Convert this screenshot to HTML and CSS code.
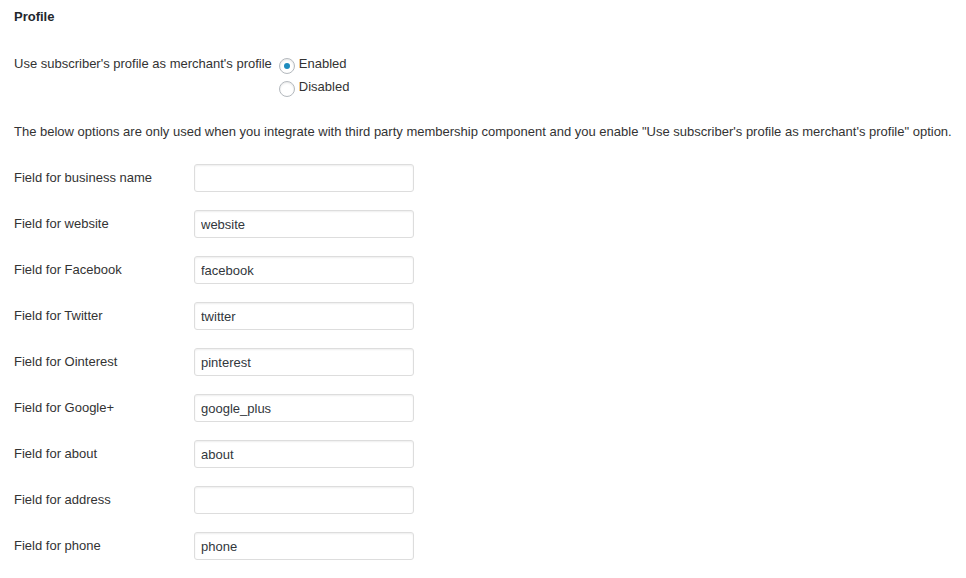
FILE: index.html
```html
<!DOCTYPE html>
<html>
<head>
<meta charset="utf-8">
<link rel="stylesheet" href="styles.css">
</head>
<body>
<div class="page">
  <h3 class="heading">Profile</h3>
  <div class="option-row">
    <div class="option-label">Use subscriber's profile as merchant's profile</div>
    <div class="radio-group">
      <label class="radio-item"><input type="radio" name="use" class="radio" checked><span>Enabled</span></label>
      <label class="radio-item"><input type="radio" name="use" class="radio"><span>Disabled</span></label>
    </div>
  </div>
  <p class="note">The below options are only used when you integrate with third party membership component and you enable "Use subscriber's profile as merchant's profile" option.</p>
  <div class="fields">
    <div class="field-row"><label class="field-label">Field for business name</label><input class="text-input" type="text" value=""></div>
    <div class="field-row"><label class="field-label">Field for website</label><input class="text-input" type="text" value="website"></div>
    <div class="field-row"><label class="field-label">Field for Facebook</label><input class="text-input" type="text" value="facebook"></div>
    <div class="field-row"><label class="field-label">Field for Twitter</label><input class="text-input" type="text" value="twitter"></div>
    <div class="field-row"><label class="field-label">Field for Ointerest</label><input class="text-input" type="text" value="pinterest"></div>
    <div class="field-row"><label class="field-label">Field for Google+</label><input class="text-input" type="text" value="google_plus"></div>
    <div class="field-row"><label class="field-label">Field for about</label><input class="text-input" type="text" value="about"></div>
    <div class="field-row"><label class="field-label">Field for address</label><input class="text-input" type="text" value=""></div>
    <div class="field-row"><label class="field-label">Field for phone</label><input class="text-input" type="text" value="phone"></div>
  </div>
</div>
</body>
</html>
```

FILE: styles.css
```css
html, body {
  margin: 0;
  padding: 0;
  background: #fff;
}
body {
  font-family: "Liberation Sans", Arial, sans-serif;
  font-size: 13px;
  line-height: 18px;
  color: #333;
}
.page {
  padding: 8px 14px 0 14px;
}
.heading {
  margin: 0;
  font-size: 13px;
  font-weight: bold;
  line-height: 18px;
  color: #23282d;
}
.option-row {
  display: flex;
  align-items: flex-start;
  margin-top: 29px;
}
.option-label {
  margin-right: 7px;
}
.radio-group {
  display: flex;
  flex-direction: column;
  gap: 4px;
}
.radio-item {
  display: flex;
  align-items: flex-start;
  gap: 4px;
}
.radio {
  -webkit-appearance: none;
  appearance: none;
  margin: 3px 0 0 0;
  width: 16px;
  height: 16px;
  border: 1px solid #b4b9be;
  border-radius: 50%;
  background: #fff;
  box-shadow: inset 0 1px 2px rgba(0,0,0,0.1);
  box-sizing: border-box;
  position: relative;
}
.radio:checked::before {
  content: "";
  position: absolute;
  left: 4px;
  top: 4px;
  width: 6px;
  height: 6px;
  border-radius: 50%;
  background: #1e8cbe;
}
.note {
  margin: 26px 0 0 0;
}
.fields {
  display: flex;
  flex-direction: column;
  gap: 18px;
  margin-top: 23px;
}
.field-row {
  display: flex;
  align-items: center;
  height: 28px;
}
.field-label {
  width: 180px;
  flex: none;
}
.text-input {
  box-sizing: border-box;
  width: 220px;
  height: 28px;
  margin: 0;
  padding: 0 6px;
  border: 1px solid #ddd;
  border-radius: 3px;
  box-shadow: inset 0 1px 2px rgba(0,0,0,0.07);
  font-family: "Liberation Sans", Arial, sans-serif;
  font-size: 13px;
  color: #32373c;
  background: #fff;
  outline: none;
}
```
